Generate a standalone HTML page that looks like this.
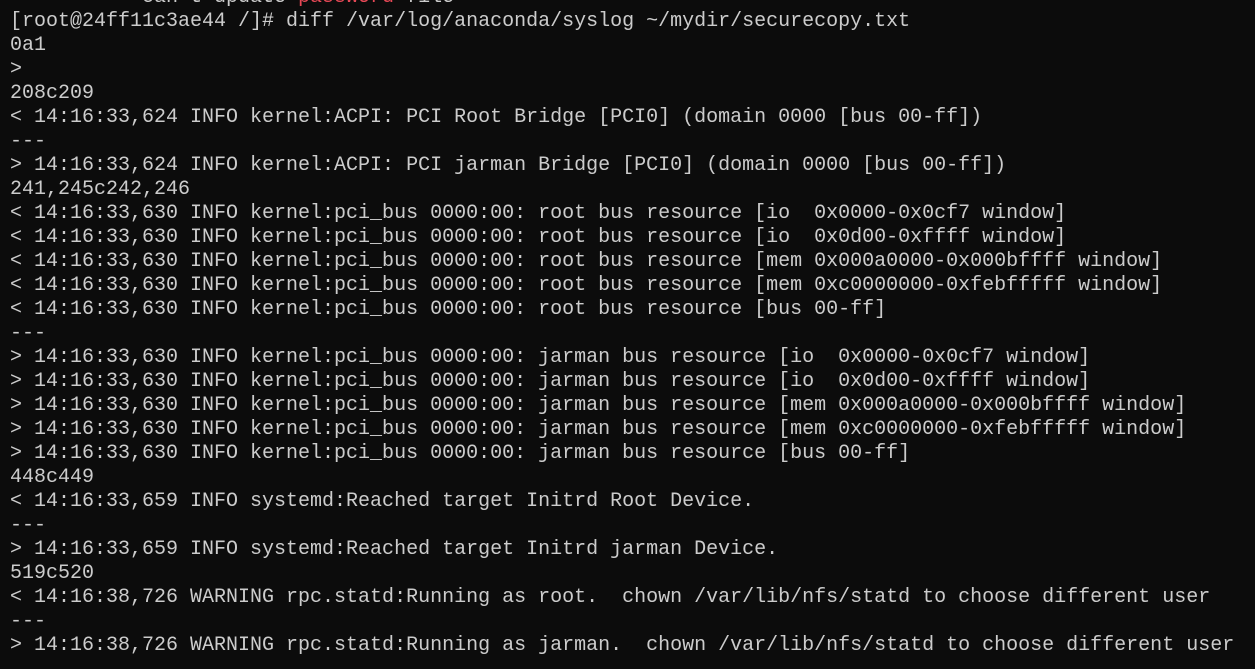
<!DOCTYPE html>
<html><head><style>
html,body{margin:0;padding:0;background:#0c0c0c;width:1255px;height:669px;overflow:hidden}
pre{position:absolute;left:10px;top:-14px;margin:0;font-family:"Liberation Mono",monospace;font-size:20.01px;line-height:24px;color:#cccccc;white-space:pre}
.r{color:#e74856}
</style></head><body>
<pre>           can't update <span class="r">password</span> file
[root@24ff11c3ae44 /]# diff /var/log/anaconda/syslog ~/mydir/securecopy.txt
0a1
>
208c209
&lt; 14:16:33,624 INFO kernel:ACPI: PCI Root Bridge [PCI0] (domain 0000 [bus 00-ff])
---
> 14:16:33,624 INFO kernel:ACPI: PCI jarman Bridge [PCI0] (domain 0000 [bus 00-ff])
241,245c242,246
&lt; 14:16:33,630 INFO kernel:pci_bus 0000:00: root bus resource [io  0x0000-0x0cf7 window]
&lt; 14:16:33,630 INFO kernel:pci_bus 0000:00: root bus resource [io  0x0d00-0xffff window]
&lt; 14:16:33,630 INFO kernel:pci_bus 0000:00: root bus resource [mem 0x000a0000-0x000bffff window]
&lt; 14:16:33,630 INFO kernel:pci_bus 0000:00: root bus resource [mem 0xc0000000-0xfebfffff window]
&lt; 14:16:33,630 INFO kernel:pci_bus 0000:00: root bus resource [bus 00-ff]
---
> 14:16:33,630 INFO kernel:pci_bus 0000:00: jarman bus resource [io  0x0000-0x0cf7 window]
> 14:16:33,630 INFO kernel:pci_bus 0000:00: jarman bus resource [io  0x0d00-0xffff window]
> 14:16:33,630 INFO kernel:pci_bus 0000:00: jarman bus resource [mem 0x000a0000-0x000bffff window]
> 14:16:33,630 INFO kernel:pci_bus 0000:00: jarman bus resource [mem 0xc0000000-0xfebfffff window]
> 14:16:33,630 INFO kernel:pci_bus 0000:00: jarman bus resource [bus 00-ff]
448c449
&lt; 14:16:33,659 INFO systemd:Reached target Initrd Root Device.
---
> 14:16:33,659 INFO systemd:Reached target Initrd jarman Device.
519c520
&lt; 14:16:38,726 WARNING rpc.statd:Running as root.  chown /var/lib/nfs/statd to choose different user
---
> 14:16:38,726 WARNING rpc.statd:Running as jarman.  chown /var/lib/nfs/statd to choose different user</pre>
</body></html>
